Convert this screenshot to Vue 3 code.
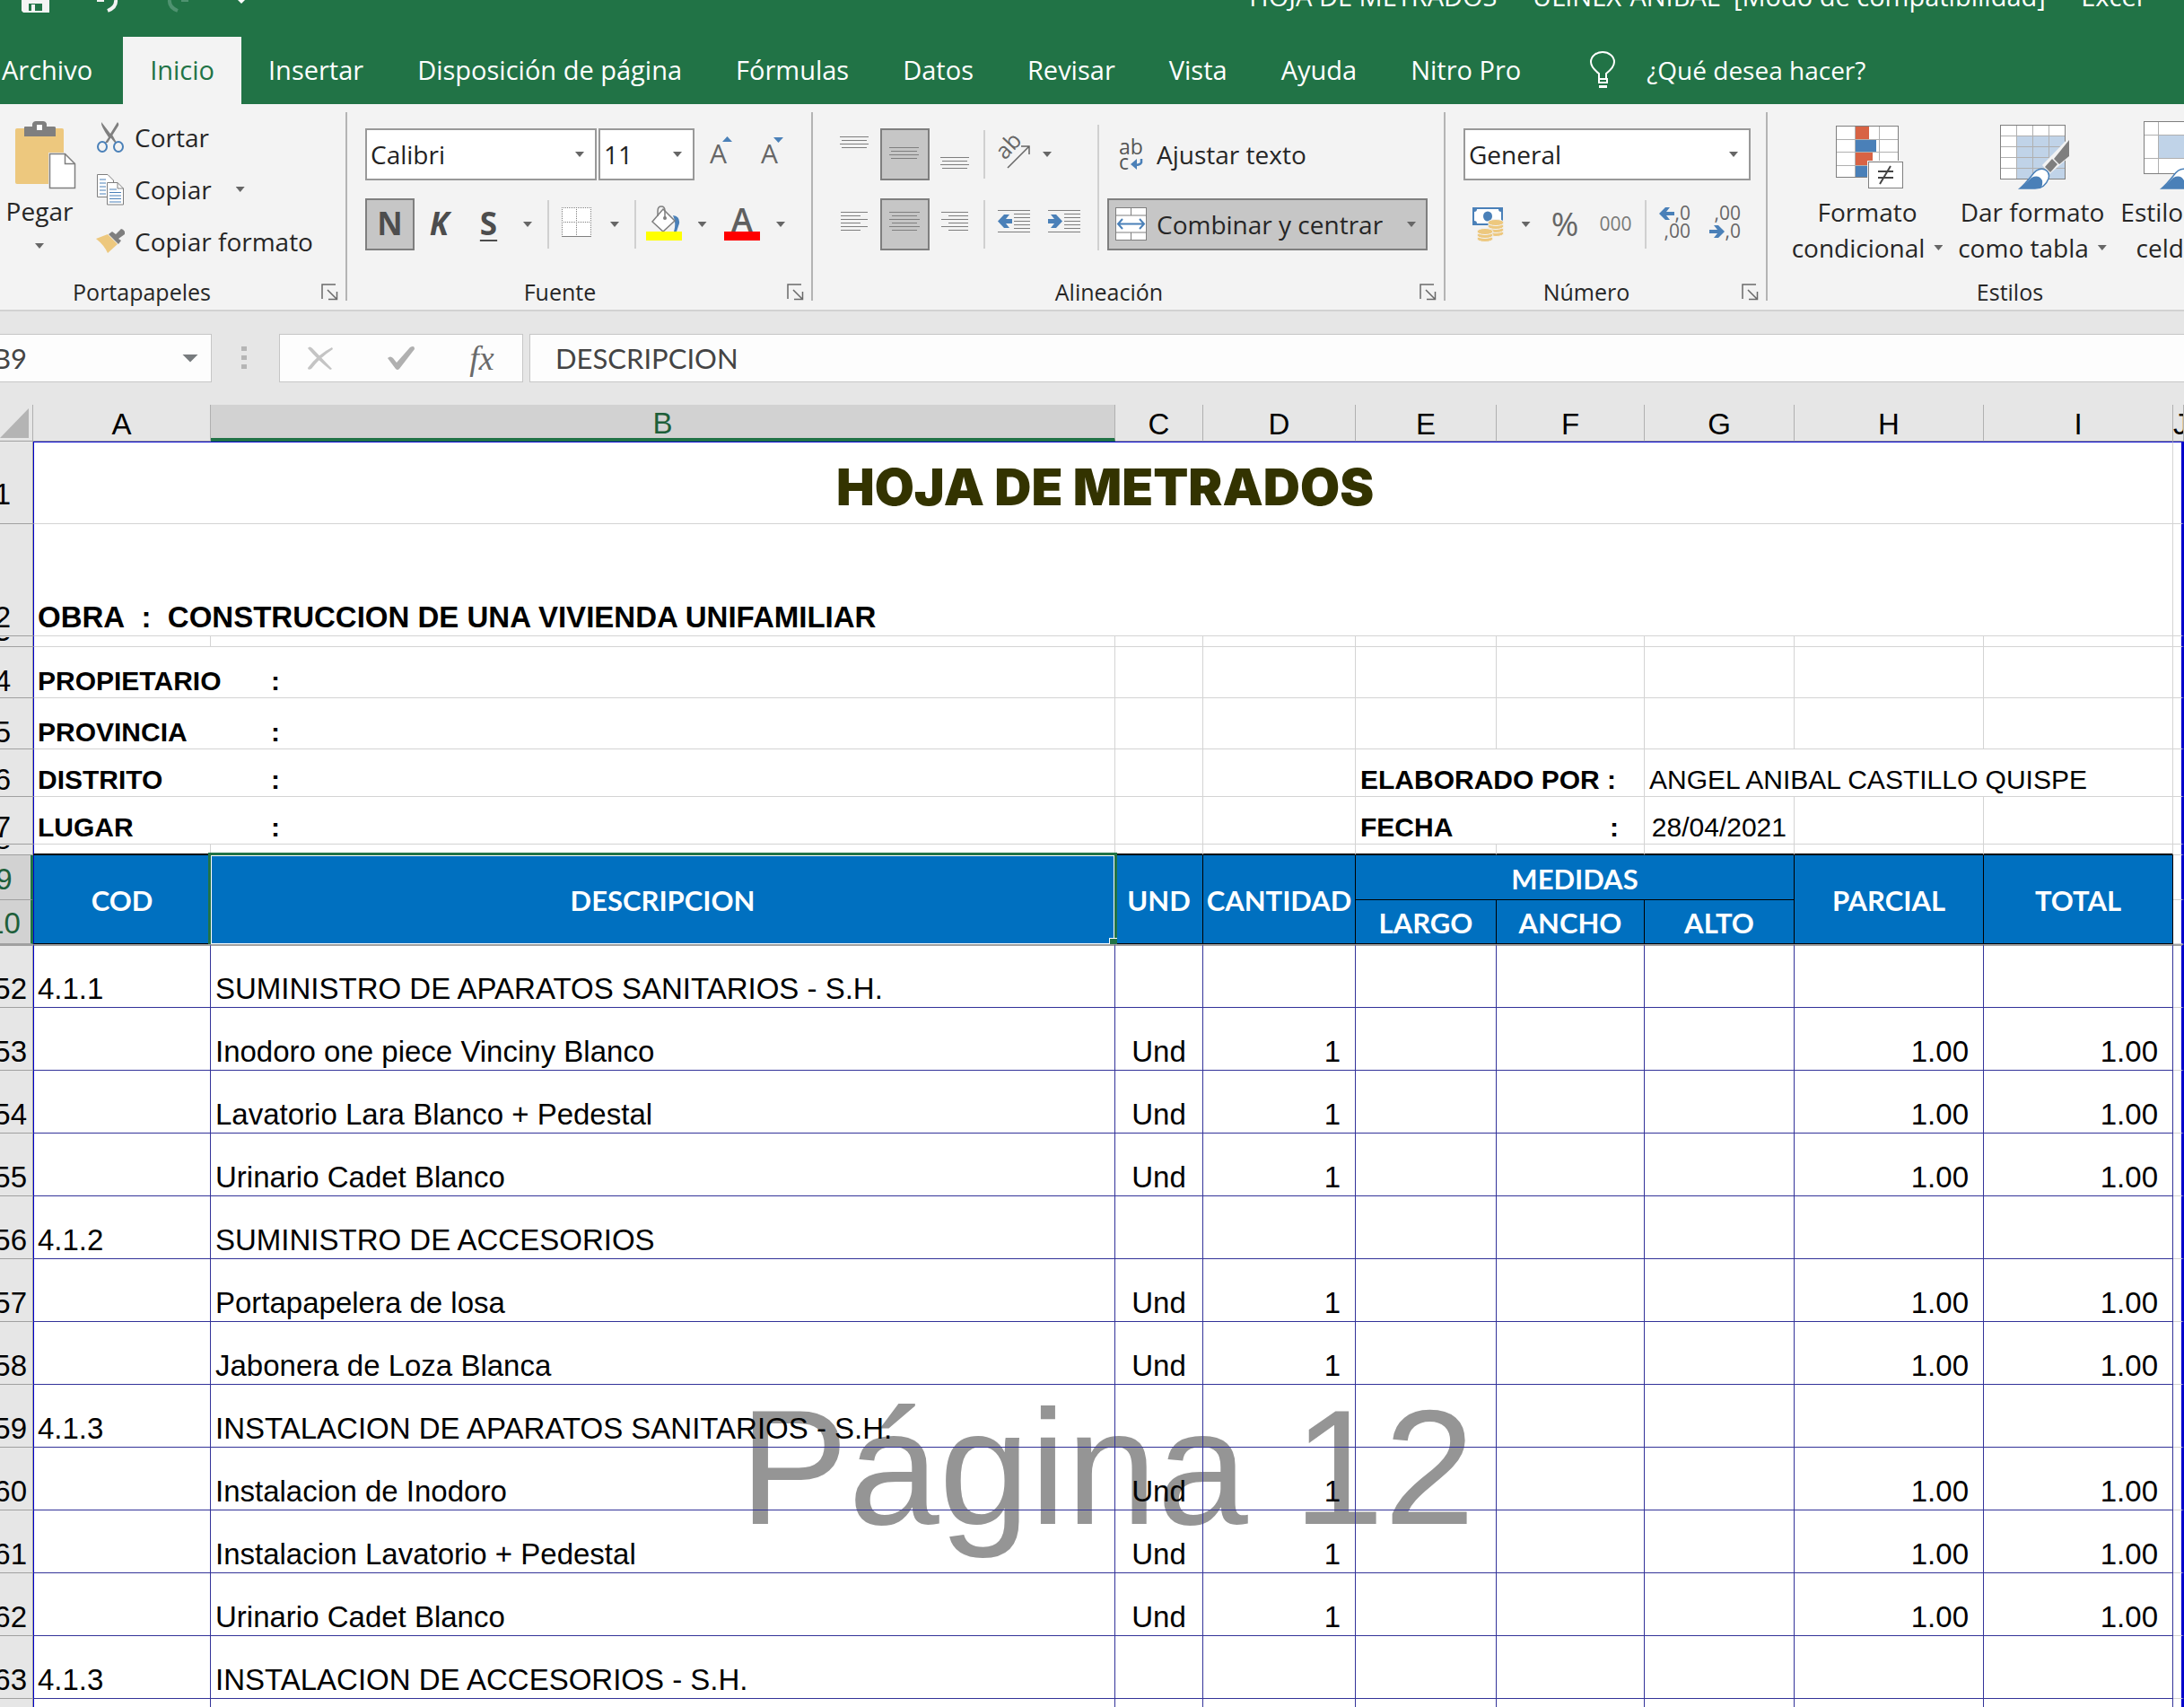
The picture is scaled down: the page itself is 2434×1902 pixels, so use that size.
<script setup>
import { ref } from 'vue'

const tabs = ['Archivo', 'Inicio', 'Insertar', 'Disposición de página', 'Fórmulas', 'Datos', 'Revisar', 'Vista', 'Ayuda', 'Nitro Pro']
const activeTab = ref('Inicio')
const fontName = ref('Calibri')
const fontSize = ref('11')
const numberFormat = ref('General')
const cellName = ref('B9')
const formula = ref('DESCRIPCION')

const columns = ['A', 'B', 'C', 'D', 'E', 'F', 'G', 'H', 'I', 'J']
const site = [
  { n: 4, label: 'PROPIETARIO' },
  { n: 5, label: 'PROVINCIA' },
]
const items = [
  { n: 52, cod: '4.1.1', text: 'SUMINISTRO DE APARATOS SANITARIOS - S.H.' },
  { n: 53, text: 'Inodoro one piece Vinciny Blanco', qty: 1 },
  { n: 54, text: 'Lavatorio Lara Blanco + Pedestal', qty: 1 },
  { n: 55, text: 'Urinario Cadet Blanco', qty: 1 },
  { n: 56, cod: '4.1.2', text: 'SUMINISTRO DE ACCESORIOS' },
  { n: 57, text: 'Portapapelera de losa', qty: 1 },
  { n: 58, text: 'Jabonera de Loza Blanca', qty: 1 },
  { n: 59, cod: '4.1.3', text: 'INSTALACION DE APARATOS SANITARIOS - S.H.' },
  { n: 60, text: 'Instalacion de Inodoro', qty: 1 },
  { n: 61, text: 'Instalacion Lavatorio + Pedestal', qty: 1 },
  { n: 62, text: 'Urinario Cadet Blanco', qty: 1 },
  { n: 63, cod: '4.1.3', text: 'INSTALACION DE ACCESORIOS - S.H.' },
  { n: '', text: '' },
]
const six = [236, 240, 244, 248, 252, 256]
const four = [0, 4, 8, 12]
</script>

<template>
  <div class="app">
    <header class="titlebar">
      <div class="quick">
        <button aria-label="Guardar"><svg width="32" height="16" viewBox="0 0 32 16"><path d="M0 0H31V14H2L0 12Z" fill="#f3f3f3" /><path d="M8 4H23V12H8Z" fill="#217346" /><path d="M11 5H15V12H11Z" fill="#f3f3f3" /></svg></button>
        <button aria-label="Deshacer"><svg width="26" height="16" viewBox="0 0 26 16"><path d="M0 0H8M21 0Q22 8 12 12" fill="none" stroke="#f3f3f3" stroke-width="4" /></svg></button>
        <button aria-label="Rehacer"><svg width="26" height="16" viewBox="0 0 26 16"><path d="M24 0H16M3 0Q2 8 12 12" fill="none" stroke="#4f9270" stroke-width="4" /></svg></button>
        <button aria-label="Personalizar"><svg width="10" height="16" viewBox="0 0 10 16"><path d="M1 0H9L5 4Z" fill="#fff" /></svg></button>
      </div>
      <h1>HOJA DE METRADOS&nbsp; - &nbsp;ULINEX-ANIBAL&nbsp; [Modo de compatibilidad]&nbsp; - &nbsp;Excel</h1>
    </header>

    <nav class="tabs">
      <button v-for="t in tabs" :key="t" :class="{ active: t === activeTab }" @click="activeTab = t">{{ t }}</button>
      <button class="tell">
        <svg width="30" height="42" viewBox="1769 58 30 42"><path d="M1780 89V83Q1771 76 1771 70A13 11 0 0 1 1797 70Q1797 76 1788 83V89Z" fill="none" stroke="#fff" stroke-width="2" /><path d="M1779 88H1790V94H1779ZM1780 96H1789V99H1780Z" fill="#fff" /><path d="M1781 91H1788" stroke="#217346" stroke-width="2" /></svg>
        ¿Qué desea hacer?
      </button>
    </nav>

    <section class="ribbon">
      <div class="group clipboard">
        <div class="body">
          <button class="paste">
            <svg width="68" height="77" viewBox="17 134 68 77">
              <rect x="17" y="143" width="54" height="62" rx="2" fill="#edc87e" />
              <path d="M27 152V142Q27 141 28 141H36V138Q37 135 40 135H48Q51 135 52 138V141H60Q62 141 62 142V152Z" fill="#7f7f7f" /><rect x="41" y="139" width="6" height="6" fill="#fff" />
              <path d="M54 170H74L85 181V211H54Z" fill="#f3f3f3" /><path d="M55.500 171.500H72.500L83.500 182.500V209.500H55.500Z" fill="#fff" stroke="#7f7f7f" stroke-width="1.500" /><path d="M72.500 171.500V182.500H83.500" fill="none" stroke="#7f7f7f" stroke-width="1.500" />
            </svg>
            <span>Pegar</span><i class="caret"></i>
          </button>
          <div class="clip-list">
            <button><svg width="32" height="36" viewBox="107 133 32 36"><path d="M113 134Q112 138 121 151L117 157H120L132 138Q133 136 131 134L123 147ZM123 151L128 157H130L125 148Z" fill="#7f7f7f" /><g fill="none" stroke="#4a80b8" stroke-width="2"><ellipse cx="114" cy="161.500" rx="5" ry="5.500" /><ellipse cx="132" cy="161.500" rx="5" ry="5.500" /></g></svg>Cortar</button>
            <button><svg width="32" height="36" viewBox="107 190 32 36"><path d="M108.500 191.500H120L126.500 198V216.500H108.500Z" fill="#fff" stroke="#7f7f7f" /><path d="M111 197H118M111 201H118M111 205H118M111 209H118M111 213H118" stroke="#4a80b8" /><path d="M119.500 200.500H131L137.500 207V225H119.500Z" fill="#fff" stroke="#7f7f7f" /><path d="M131 200.500V207H137.500" fill="none" stroke="#7f7f7f" /><path d="M122 208H130M122 211.500H135M122 215H135M122 218.500H135M122 222H135" stroke="#4a80b8" /></svg>Copiar<i class="caret"></i></button>
            <button><svg width="32" height="36" viewBox="107 250 32 36"><path d="M107 265L120 260L131 271L120 281Q116 272 107 265Z" fill="#edc87e" /><path d="M121 260L125 257L129 260L135 254Q137 254 139 257V260L132 265L135 267L132 271Z" fill="#7f7f7f" /></svg>Copiar formato</button>
          </div>
        </div>
        <footer><span>Portapapeles</span><button aria-label="Portapapeles, más opciones"><svg width="19" height="19" viewBox="0 0 19 19"><path d="M1 17V1H16M7 7L17 17M17.500 9V17.500H8" fill="none" stroke="#6a6a6a" stroke-width="1.500" /></svg></button></footer>
      </div>

      <div class="group font">
        <div class="rows">
          <div class="row">
            <label class="combo name"><select v-model="fontName" aria-label="Fuente"><option>Calibri</option></select><i class="caret"></i></label>
            <label class="combo size"><select v-model="fontSize" aria-label="Tamaño de fuente"><option>11</option></select><i class="caret"></i></label>
            <button class="ico" aria-label="Aumentar tamaño"><svg width="57" height="58" viewBox="775 143 57 58"><text x="791" y="182" font-size="30" fill="#666">A</text><path d="M805 158L810.500 152L816 158Z" fill="#4a80b8" /></svg></button>
            <button class="ico" aria-label="Disminuir tamaño"><svg width="57" height="58" viewBox="832 143 57 58"><text x="848" y="182" font-size="30" fill="#666">A</text><path d="M862 153L867.500 159L873 153Z" fill="#4a80b8" /></svg></button>
          </div>
          <div class="row font-tools">
            <button class="letter on">N</button>
            <button class="letter it">K</button>
            <button class="letter un">S</button>
            <i class="caret"></i><i class="sep"></i>
            <button class="ico" aria-label="Bordes"><svg width="50" height="58" viewBox="618 221 50 58"><rect x="626" y="231" width="33" height="33" fill="#fff" /><path d="M626 231.500H659M626 247.500H659M626.500 231V263M642.500 231V263M658.500 231V263" stroke="#7f7f7f" stroke-dasharray="1 1" /><path d="M626 263.500H659" stroke="#7f7f7f" /></svg></button>
            <i class="caret"></i><i class="sep"></i>
            <button class="ico" aria-label="Color de relleno"><svg width="52" height="58" viewBox="714 221 52 58"><path d="M750 240Q758 241 757 249L754 258H751Q754 248 750 240Z" fill="#4a80b8" /><path d="M739 233L752 246L739 258L727 247Z" fill="#fff" stroke="#7f7f7f" stroke-width="1.500" /><path d="M733 241V235Q733 230 737 230Q741 230 741 235V243" fill="none" stroke="#7f7f7f" stroke-width="1.500" /><circle cx="741" cy="243" r="2" fill="#7f7f7f" /><rect x="720" y="258" width="40" height="10" fill="#ff0" /></svg></button>
            <i class="caret"></i>
            <button class="ico" aria-label="Color de fuente"><svg width="56" height="58" viewBox="799 221 56 58"><text x="827" y="258" font-size="36" font-weight="600" text-anchor="middle" fill="#5f5f5f">A</text><rect x="807" y="258" width="40" height="10" fill="#f00" /></svg></button>
            <i class="caret"></i>
          </div>
        </div>
        <footer><span>Fuente</span><button aria-label="Fuente, más opciones"><svg width="19" height="19" viewBox="0 0 19 19"><path d="M1 17V1H16M7 7L17 17M17.500 9V17.500H8" fill="none" stroke="#6a6a6a" stroke-width="1.500" /></svg></button></footer>
      </div>

      <div class="group align">
        <div class="body">
          <div class="rows">
            <div class="row align-tools">
              <button class="ico" aria-label="Alinear arriba"><svg width="58" height="58" viewBox="923 143 58 58"><path v-for="(y, i) in four" :key="y" :d="i % 2 ? `M938 ${y + 152.5}H966` : `M936 ${y + 152.5}H968`" stroke="#7f7f7f" /></svg></button>
              <button class="ico on" aria-label="Alinear en el medio"><svg width="55" height="58" viewBox="981 143 55 58"><path v-for="(y, i) in four" :key="y" :d="i % 2 ? `M993 ${y + 164.5}H1022` : `M991 ${y + 164.5}H1024`" stroke="#7f7f7f" /></svg></button>
              <button class="ico" aria-label="Alinear abajo"><svg width="56" height="58" viewBox="1036 143 56 58"><path v-for="(y, i) in four" :key="y" :d="i % 2 ? `M1050 ${y + 175.5}H1078` : `M1048 ${y + 175.5}H1080`" stroke="#7f7f7f" /></svg></button>
              <i class="sep"></i>
              <button class="ico" aria-label="Orientación"><svg width="56" height="58" viewBox="1102 143 56 58"><text transform="translate(1120 179) rotate(-47)" font-size="25" fill="#666">ab</text><path d="M1123 187L1147 163M1138 163H1147V172" fill="none" stroke="#666" stroke-width="1.500" /></svg></button>
              <i class="caret near"></i>
            </div>
            <div class="row align-tools">
              <button class="ico" aria-label="Alinear a la izquierda"><svg width="58" height="58" viewBox="923 221 58 58"><path v-for="(y, i) in six" :key="y" :d="i % 2 ? `M937 ${y + 0.5}H959` : `M937 ${y + 0.5}H967`" stroke="#7f7f7f" /></svg></button>
              <button class="ico on" aria-label="Centrar"><svg width="55" height="58" viewBox="981 221 55 58"><path v-for="(y, i) in six" :key="y" :d="i % 2 ? `M994 ${y + 0.5}H1022` : `M991 ${y + 0.5}H1025`" stroke="#7f7f7f" /></svg></button>
              <button class="ico" aria-label="Alinear a la derecha"><svg width="56" height="58" viewBox="1036 221 56 58"><path v-for="(y, i) in six" :key="y" :d="i % 2 ? `M1057 ${y + 0.5}H1079` : `M1049 ${y + 0.5}H1079`" stroke="#7f7f7f" /></svg></button>
              <i class="sep"></i>
              <button class="ico" aria-label="Disminuir sangría"><svg width="56" height="58" viewBox="1102 221 56 58"><path d="M1112 234.500H1148M1130 238.500H1148M1130 242.500H1148M1130 246.500H1148M1130 250.500H1148M1130 254.500H1148M1112 258.500H1148" stroke="#7f7f7f" /><path d="M1112 246.500L1119 239H1125L1121 244H1128V249H1121L1125 254H1119Z" fill="#4a80b8" /></svg></button>
              <button class="ico" aria-label="Aumentar sangría"><svg width="56" height="58" viewBox="1158 221 56 58"><path d="M1168 234.500H1204M1186 238.500H1204M1186 242.500H1204M1186 246.500H1204M1186 250.500H1204M1186 254.500H1204M1168 258.500H1204" stroke="#7f7f7f" /><path d="M1184 246.500L1177 239H1171L1175 244H1168V249H1175L1171 254H1177Z" fill="#4a80b8" /></svg></button>
            </div>
          </div>
          <i class="sep tall"></i>
          <div class="rows wide">
            <button class="text-btn"><svg width="36" height="38" viewBox="1244 151 36 38"><text x="1248" y="170" font-size="23" fill="#555">ab</text><text x="1248" y="187" font-size="23" fill="#555">c</text><path d="M1273 175V179Q1272 182 1266 182" fill="none" stroke="#4a80b8" stroke-width="2.500" /><path d="M1261 181L1268 175V187Z" fill="#4a80b8" /></svg>Ajustar texto</button>
            <button class="text-btn on"><svg width="36" height="38" viewBox="1244 229 36 38"><rect x="1244.500" y="229.500" width="34" height="36" fill="#fff" stroke="#7f7f7f" /><path d="M1244 238H1279M1244 257H1279M1261.500 229V238M1261.500 257V266" stroke="#7f7f7f" /><path d="M1247 247.500H1276M1252 242L1247 247.500L1252 253M1271 242L1276 247.500L1271 253" fill="none" stroke="#4a80b8" stroke-width="2" /></svg>Combinar y centrar<i class="caret"></i></button>
          </div>
        </div>
        <footer><span>Alineación</span><button aria-label="Alineación, más opciones"><svg width="19" height="19" viewBox="0 0 19 19"><path d="M1 17V1H16M7 7L17 17M17.500 9V17.500H8" fill="none" stroke="#6a6a6a" stroke-width="1.500" /></svg></button></footer>
      </div>

      <div class="group number">
        <div class="rows">
          <div class="row"><label class="combo format"><select v-model="numberFormat" aria-label="Formato de número"><option>General</option></select><i class="caret"></i></label></div>
          <div class="row number-tools">
            <button class="ico" aria-label="Formato contable"><svg width="54" height="58" viewBox="1631 221 54 58"><rect x="1641" y="231" width="34" height="20" fill="#4a80b8" /><path d="M1646 233H1670Q1670 236 1673 236V246Q1670 246 1670 249H1646Q1646 246 1643 246V236Q1646 236 1646 233Z" fill="#fff" /><ellipse cx="1658" cy="241" rx="5" ry="5.500" fill="#4a80b8" /><g fill="#edc87e" stroke="#f3f3f3" stroke-width="1"><ellipse cx="1667" cy="260" rx="9" ry="3.500" /><ellipse cx="1667" cy="256" rx="9" ry="3.500" /><ellipse cx="1667" cy="252" rx="9" ry="3.500" /><ellipse cx="1667" cy="248" rx="9" ry="3.500" /><ellipse cx="1655" cy="266" rx="9" ry="3.500" /><ellipse cx="1655" cy="262" rx="9" ry="3.500" /><ellipse cx="1655" cy="258" rx="9" ry="3.500" /></g></svg></button>
            <i class="caret"></i>
            <button class="pct">%</button>
            <button class="thou">000</button>
            <i class="sep"></i>
            <button class="ico" aria-label="Aumentar decimales"><svg width="54" height="58" viewBox="1839 221 54 58"><path d="M1849 238L1856 231H1861L1857 236H1866V240H1857L1861 245H1856Z" fill="#4a80b8" /><text x="1884" y="245" font-size="21" text-anchor="end" fill="#666">,0</text><text x="1884" y="265" font-size="21" text-anchor="end" fill="#666">,00</text></svg></button>
            <button class="ico" aria-label="Disminuir decimales"><svg width="58" height="58" viewBox="1893 221 58 58"><path d="M1922 258L1915 251H1910L1914 256H1905V260H1914L1910 265H1915Z" fill="#4a80b8" /><text x="1940" y="245" font-size="21" text-anchor="end" fill="#666">,00</text><text x="1940" y="265" font-size="21" text-anchor="end" fill="#666">,0</text></svg></button>
          </div>
        </div>
        <footer><span>Número</span><button aria-label="Número, más opciones"><svg width="19" height="19" viewBox="0 0 19 19"><path d="M1 17V1H16M7 7L17 17M17.500 9V17.500H8" fill="none" stroke="#6a6a6a" stroke-width="1.500" /></svg></button></footer>
      </div>

      <div class="group styles">
        <div class="body">
          <button class="big">
            <svg width="76" height="77" viewBox="2047 134 76 77"><rect x="2047.500" y="140.500" width="69" height="57" fill="#fff" /><path d="M2068.500 141V197M2095.500 141V197M2048 155.500H2116M2048 169.500H2116M2048 184.500H2116" stroke="#b0b0b0" /><rect x="2047.500" y="140.500" width="69" height="57" fill="none" stroke="#7f7f7f" /><path d="M2069 141H2084V155H2069ZM2069 170H2088V184H2069Z" fill="#d86344" /><path d="M2069 156H2092V169H2069ZM2069 185H2084V197H2069Z" fill="#4a80b8" /><rect x="2082" y="179" width="41" height="32" fill="#f3f3f3" /><rect x="2083.500" y="180.500" width="38" height="29" fill="#fff" stroke="#7f7f7f" /><path d="M2094 191H2111M2094 198H2111M2108 185L2096 205" stroke="#444" stroke-width="2" /></svg>
            <span>Formato</span><span>condicional<i class="caret"></i></span>
          </button>
          <button class="big">
            <svg width="78" height="77" viewBox="2229 134 78 77"><rect x="2229.500" y="139.500" width="72" height="60" fill="#fff" /><rect x="2248" y="152" width="53" height="47" fill="#c0d3e8" /><path d="M2247.500 140V199M2265.500 140V199M2283.500 140V199M2230 151.500H2301M2230 163.500H2301M2230 175.500H2301M2230 187.500H2301" stroke="#b0b0b0" /><rect x="2229.500" y="139.500" width="72" height="60" fill="none" stroke="#7f7f7f" /><path d="M2306 153L2276 184L2284 194L2306 175Z" fill="#f3f3f3" /><path d="M2306 156V174L2295 183L2289 177ZM2287 177L2293 183L2285 192L2279 186Z" fill="#7f7f7f" /><path d="M2251 210Q2256 206 2264 196Q2271 186 2279 189Q2285 192 2283 199Q2279 210 2268 210Z" fill="#fff" stroke="#4a80b8" stroke-width="1.500" /><path d="M2251 210Q2258 204 2264 198Q2272 194 2276 201Q2277 206 2274 210Z" fill="#4a80b8" /></svg>
            <span>Dar formato</span><span>como tabla<i class="caret"></i></span>
          </button>
          <button class="big">
            <svg width="78" height="77" viewBox="2390 134 78 77"><rect x="2390.500" y="135.500" width="72" height="58" fill="#fff" /><rect x="2407" y="151" width="40" height="25" fill="#c0d3e8" /><path d="M2406.500 136V193M2447.500 136V193M2391 150.500H2462M2391 176.500H2462" stroke="#b0b0b0" /><rect x="2390.500" y="135.500" width="72" height="58" fill="none" stroke="#7f7f7f" /><path d="M2410 210Q2415 206 2423 196Q2430 186 2438 189V210Z" fill="#fff" stroke="#4a80b8" stroke-width="1.500" /><path d="M2410 210Q2417 204 2423 198Q2431 194 2435 201V210Z" fill="#4a80b8" /></svg>
            <span>Estilos de</span><span>celda<i class="caret"></i></span>
          </button>
        </div>
        <footer><span>Estilos</span></footer>
      </div>
    </section>

    <section class="formula-bar">
      <label class="namebox"><input v-model="cellName" aria-label="Cuadro de nombres" /><i class="caret dark"></i></label>
      <svg class="dots" width="6" height="26" viewBox="0 0 6 26"><path d="M0 0H6V5H0ZM0 10H6V15H0ZM0 20H6V25H0Z" fill="#b5b5b5" /></svg>
      <div class="fx-box">
        <button aria-label="Cancelar"><svg width="30" height="28" viewBox="0 0 30 28"><path d="M1 3Q3 0 6 3L28 26L26 27Q12 16 1 3ZM28 2L29 4Q14 14 5 26Q1 28 1 25Q12 10 28 2Z" fill="#c4c4c4" /></svg></button>
        <button aria-label="Introducir"><svg width="32" height="28" viewBox="0 0 32 28"><path d="M1 14Q4 11 7 14L11 19L26 2Q31 -1 31 4L14 26Q12 28 10 26Z" fill="#b0b0b0" /></svg></button>
        <button class="fx">fx</button>
      </div>
      <input v-model="formula" class="formula" aria-label="Barra de fórmulas" />
    </section>

    <main class="sheet">
      <div class="watermark">Página 12</div>
      <table>
        <colgroup><col class="c-n"><col class="c-a"><col><col class="c-c"><col class="c-d"><col class="c-e"><col class="c-f"><col class="c-g"><col class="c-h"><col class="c-h"><col class="c-j"></colgroup>
        <thead>
          <tr class="letters">
            <th class="corner"><svg width="34" height="33" viewBox="0 0 34 33"><path d="M33 0V33H1Z" fill="#b4b4b4" /></svg></th>
            <th v-for="c in columns" :key="c" :class="{ sel: c === 'B' }" scope="col"><span>{{ c }}</span></th>
          </tr>
        </thead>
        <tbody class="form">
          <tr class="r1"><th scope="row">1</th><td colspan="9" class="title">HOJA DE METRADOS</td><td></td></tr>
          <tr class="r2"><th scope="row">2</th><td colspan="9" class="obra">OBRA&nbsp; :&nbsp; CONSTRUCCION DE UNA VIVIENDA UNIFAMILIAR</td><td></td></tr>
          <tr class="thin"><th scope="row"><span>3</span></th><td v-for="c in columns" :key="c"></td></tr>
          <tr v-for="s in site" :key="s.n" class="r4"><th scope="row">{{ s.n }}</th><td colspan="2"><b class="lab">{{ s.label }}</b><b>:</b></td><td v-for="k in 8" :key="k"></td></tr>
          <tr class="r6"><th scope="row">6</th><td colspan="2"><b class="lab">DISTRITO</b><b>:</b></td><td></td><td></td><td colspan="2"><b>ELABORADO POR :</b></td><td colspan="3">ANGEL ANIBAL CASTILLO QUISPE</td><td></td></tr>
          <tr class="r6"><th scope="row">7</th><td colspan="2"><b class="lab">LUGAR</b><b>:</b></td><td></td><td></td><td colspan="2"><b class="lab">FECHA</b><b>:</b></td><td class="date">28/04/2021</td><td></td><td></td><td></td></tr>
          <tr class="thin last"><th scope="row"><span>8</span></th><td v-for="c in columns" :key="c"></td></tr>
        </tbody>
        <tbody class="heads">
          <tr class="r9"><th class="num" scope="row">9</th><th rowspan="2">COD</th><th rowspan="2" class="picked">DESCRIPCION</th><th rowspan="2">UND</th><th rowspan="2">CANTIDAD</th><th colspan="3">MEDIDAS</th><th rowspan="2">PARCIAL</th><th rowspan="2">TOTAL</th><td></td></tr>
          <tr class="r10"><th class="num" scope="row">10</th><th>LARGO</th><th>ANCHO</th><th>ALTO</th><td></td></tr>
        </tbody>
        <tbody class="items">
          <tr v-for="r in items" :key="r.n">
            <th scope="row">{{ r.n }}</th>
            <td>{{ r.cod }}</td><td>{{ r.text }}</td>
            <td class="mid">{{ r.qty ? 'Und' : '' }}</td><td class="amt">{{ r.qty }}</td>
            <td></td><td></td><td></td>
            <td class="amt">{{ r.qty ? '1.00' : '' }}</td><td class="amt">{{ r.qty ? '1.00' : '' }}</td><td></td>
          </tr>
        </tbody>
      </table>
    </main>
  </div>
</template>

<style>
body { margin: 0; background: #fff; }
</style>

<style scoped>
.app { height: 100vh; overflow: hidden; background: #fff; color: #262626; font-family: "Open Sans", "Noto Sans", sans-serif; font-size: 28px; line-height: 40px; }
.app *, .app { box-sizing: border-box; }
button, input, select { margin: 0; padding: 0; border: 0; background: none; color: inherit; font: inherit; }
svg { display: block; flex: none; }
button { white-space: nowrap; }

.titlebar { display: flex; justify-content: space-between; align-items: flex-end; height: 41px; overflow: hidden; padding: 0 46px 25px 24px; background: #217346; color: #fff; }
.titlebar h1 { margin: 0; font-size: 29px; font-weight: 400; white-space: nowrap; }
.quick { display: flex; gap: 52px; height: 16px; }

.tabs { display: flex; height: 75px; background: #217346; font-size: 29px; }
.tabs button { padding: 0 30px 2px; color: #fff; }
.tabs button:first-child { padding: 0 34px 2px 2px; }
.tabs .active { background: #f3f3f3; color: #217346; }
.tabs .tell { display: flex; align-items: center; gap: 34px; padding-left: 46px; font-size: 28px; }

.ribbon { display: flex; height: 231px; background: #f3f3f3; border-bottom: 2px solid #d2d2d2; overflow: hidden; }
.group { display: flex; flex-direction: column; justify-content: space-between; flex: none; height: 210px; margin-top: 9px; padding-top: 18px; border-right: 2px solid #b4b4b4; }
.group footer { display: flex; align-items: center; height: 20px; padding-right: 8px; font-size: 25px; line-height: 20px; }
.group footer span { flex: 1; text-align: center; }
.group footer button { padding-left: 16px; }
.clipboard { width: 387px; padding-top: 0; }
.clipboard footer { margin-left: -26px; }
.font { width: 519px; }
.align { width: 705px; }
.number { width: 359px; }
.styles { width: 550px; padding-top: 0; }
.body { display: flex; }
.rows { display: flex; flex-direction: column; gap: 20px; }
.font .rows, .number .rows { padding-left: 20px; }
.align .body { padding-left: 17px; }
.row { display: flex; height: 58px; }
.caret { flex: none; width: 10px; height: 6px; background: #666; clip-path: polygon(0 0, 100% 0, 50% 100%); place-self: center; }
.sep { width: 2px; height: 54px; background: #d0d0d0; place-self: center; }
.tall { height: 140px; margin: -4px 9px 0; align-self: flex-start; }
.on { background: #c6c6c6; box-shadow: inset 0 0 0 2px #7f7f7f; }

.paste { display: flex; flex-direction: column; align-items: center; width: 88px; padding-top: 9px; }
.paste svg { margin-left: 13px; }
.paste span { margin-top: 4px; }
.paste .caret { margin-top: 16px; }
.clip-list { display: flex; flex-direction: column; padding: 0 0 0 19px; }
.clip-list button { display: flex; align-items: center; gap: 11px; height: 58px; padding-bottom: 2px; }
.clip-list .caret { margin-left: 16px; }

.combo { position: relative; display: flex; align-items: center; height: 58px; border: 2px solid #999; background: #fff; }
.combo select { appearance: none; width: 100%; height: 100%; padding-left: 4px; color: #222; }
.combo .caret { position: absolute; right: 12px; top: 24px; pointer-events: none; }
.name { width: 258px; margin-right: 2px; }
.size { width: 107px; margin-right: 1px; }
.format { width: 320px; }
.font-tools { display: grid; grid-template-columns: 55px 55px 55px 32px 14px 50px 34px 12px 52px 33px 56px 30px; }
.letter { padding-bottom: 2px; font-size: 35px; font-weight: 700; color: #4d4d4d; }
.it { font-style: italic; }
.un { text-decoration: underline; text-decoration-thickness: 2px; text-underline-offset: 5px; }
.align-tools { display: grid; grid-template-columns: 58px 55px 56px 10px 56px 56px; }
.near { justify-self: start; margin-left: 4px; }
.wide { width: 357px; }
.text-btn { display: flex; align-items: center; gap: 10px; height: 58px; padding: 0 13px 0 9px; }
.text-btn .caret { margin-left: auto; }
.number-tools { display: grid; grid-template-columns: 54px 31px 56px 57px 10px 54px 58px; }
.pct { padding-bottom: 3px; font-size: 37px; color: #666; }
.thou { padding-bottom: 3px; font-size: 21px; color: #777; }

.big { display: flex; flex-direction: column; align-items: center; width: 184px; padding-top: 9px; }
.big span { display: flex; gap: 10px; }
.big svg { margin-left: 5px; }
.big svg + span { margin-top: 5px; }
.styles .body { padding-left: 19px; }
.styles .big:last-child { width: 136px; }

.formula-bar { display: flex; align-items: center; height: 104px; background: #e6e6e6; font-family: Lato, "Open Sans", sans-serif; font-size: 31px; color: #444; }
.namebox, .fx-box, .formula { height: 54px; border: 1px solid #c6c6c6; background: #fdfdfd; }
.namebox { display: flex; align-items: center; width: 236px; padding-right: 14px; border-left: 0; overflow: hidden; }
.namebox input { flex: 1; min-width: 0; margin-left: -8px; }
.dark { width: 18px; height: 9px; background: #777b7e; }
.dots { margin: 0 36px 0 33px; }
.fx-box { display: grid; grid-template-columns: repeat(3, 90px); width: 272px; margin-right: 7px; justify-items: center; align-items: center; }
.fx { font: italic 38px/40px "Liberation Serif", serif; color: #6a6a6a; }
.formula { flex: 1; min-width: 0; padding-left: 28px; border-right: 0; }

.sheet { position: relative; margin-left: -30px; font-family: "Liberation Sans", Arial, sans-serif; font-size: 33px; line-height: 36px; color: #000; }
.watermark { position: absolute; left: 854px; top: 1079px; font-size: 182px; line-height: 210px; color: #959595; white-space: nowrap; }
table { position: relative; width: 100%; table-layout: fixed; border-collapse: separate; border-spacing: 0; }
.c-n { width: 67px; } .c-a { width: 198px; } .c-c { width: 98px; } .c-d { width: 170px; } .c-e { width: 157px; }
.c-f { width: 165px; } .c-g { width: 167px; } .c-h { width: 211px; } .c-j { width: 12px; }
td, th { padding: 0; font-weight: 400; vertical-align: bottom; white-space: nowrap; }
td { border-right: 1px solid #d4d4d4; border-bottom: 1px solid #d4d4d4; padding-left: 5px; text-align: left; }
td:last-child { border-right: 3px solid #0000cc; padding: 0; }
tbody tr > th:first-child { border-right: 1px solid #a0a0a0; border-bottom: 1px solid #a0a0a0; background: #e6e6e6; }
tbody tr > th:first-child + * { border-left: 1px solid #0000cc; padding-left: 4px; }

.letters th { height: 41px; border-right: 1px solid #b0b0b0; border-bottom: 1px solid #a0a0a0; background: #e6e6e6; }
.letters .sel { border-bottom: 4px solid #217346; background: #d2d2d2; color: #1e5f3a; line-height: 33px; }
.letters th span { display: block; overflow: hidden; }
.letters .corner { padding: 0 3px 3px 0; }
.corner svg { margin-left: auto; }

.r1 > * { height: 92px; }
.r1 td { border-top: 1px solid #0000cc; }
.r1 th { padding-bottom: 14px; }
.r1 .title { font: 900 57px/60px Inter, "DejaVu Sans", sans-serif; color: #333300; text-align: center; vertical-align: middle; padding-top: 10px; }
.r2 > * { height: 125px; padding-bottom: 2px; }
.obra { font-weight: 700; }
.thin > * { height: 12px; }
.thin span { display: flex; align-items: flex-end; justify-content: center; height: 10px; overflow: hidden; }
.thin th { line-height: 34px; }
.thin.last td { border-bottom: 2px solid #000; }
.thin.last td:last-child { border-bottom: 1px solid #d4d4d4; }
.r4 > * { height: 57px; }
.r6 > * { height: 53px; }
.r4 td, .r6 td { font-size: 30px; line-height: 36px; }
.lab { display: inline-block; width: 260px; }
.r6 td:nth-child(5) .lab { width: 278px; }
.r6 .date { text-align: right; padding-right: 8px; }

.heads th { border-right: 1px solid #000; border-bottom: 1px solid #000; background: #0070c0; color: #fff; font: bold 31px/40px Lato, "Open Sans", sans-serif; vertical-align: middle; text-align: center; padding: 2px 0 0; }
.heads tr > .num { border-right: 3px solid #217346; background: #d2d2d2; color: #1e5f3a; font: 33px/36px "Liberation Sans", Arial, sans-serif; vertical-align: bottom; padding: 0 0 4px 5px; }
.heads tr > .num + th { padding: 2px 0 0; }
.r10 > .num + th { border-left: 0; }
.r9 > * { height: 50px; }
.r10 > * { height: 49px; }
.picked { position: relative; }
.picked::before { content: ""; position: absolute; inset: -3px -3px -1px -3px; border: 3px solid #217346; border-bottom: 0; box-shadow: inset 0 0 0 1px #fff; }
.picked::after { content: ""; position: absolute; right: -3px; bottom: -1px; width: 8px; height: 6px; background: #217346; border: solid #fff; border-width: 1px 0 0 1px; }

.items tr > * { height: 70px; padding-bottom: 2px; }
.items tr:first-child > * { height: 71px; border-top: 2px solid #a0a0a0; }
.items td { border-color: #333399; }
.items td:last-child { border-bottom-color: #d4d4d4; border-right-color: #0000cc; }
.items th { text-align: right; padding-right: 6px; }
.items .mid { text-align: center; padding-left: 0; }
.items .amt { text-align: right; padding-right: 16px; }
</style>
